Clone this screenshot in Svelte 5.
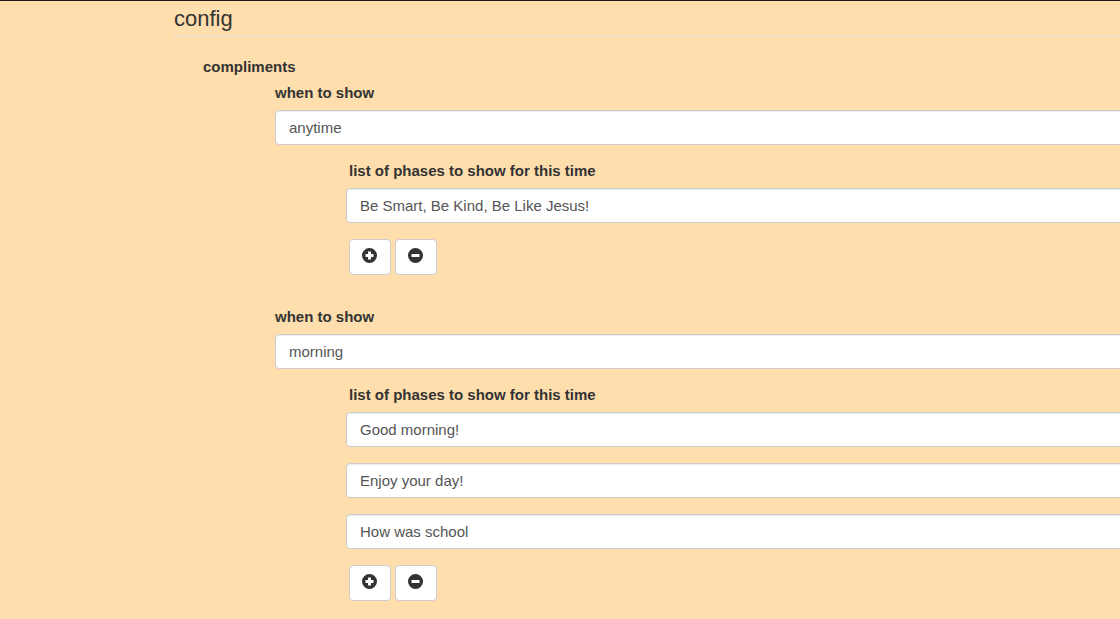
<script>
  let groups = $state([
    { time: 'anytime', phrases: ['Be Smart, Be Kind, Be Like Jesus!'] },
    { time: 'morning', phrases: ['Good morning!', 'Enjoy your day!', 'How was school'] }
  ]);

  function add(group) {
    group.phrases.push('');
  }

  function remove(group) {
    if (group.phrases.length > 1) group.phrases.pop();
  }
</script>

<form class="page">
  <fieldset class="config">
    <legend>config</legend>
    <div class="section">
      <h2>compliments</h2>
      <div class="groups">
        {#each groups as group, g}
          <section>
            <label for="time-{g}">when to show</label>
            <input id="time-{g}" type="text" bind:value={group.time} />
            <div class="phrases">
              <label class="indent" for="phrase-{g}-0">list of phases to show for this time</label>
              <div class="list">
                {#each group.phrases as _, p}
                  <input id="phrase-{g}-{p}" type="text" aria-label="phrase {p + 1}" bind:value={group.phrases[p]} />
                {/each}
                <div class="actions indent">
                  <button type="button" aria-label="Add" onclick={() => add(group)}>
                    <svg viewBox="0 0 15 15" aria-hidden="true">
                      <path fill-rule="evenodd" d="M7.5 0a7.5 7.5 0 1 0 0 15a7.5 7.5 0 0 0 0-15zM6 3.5h3V6h2.5v3H9v2.5H6V9H3.5V6H6z" />
                    </svg>
                  </button>
                  <button type="button" aria-label="Remove" onclick={() => remove(group)}>
                    <svg viewBox="0 0 15 15" aria-hidden="true">
                      <path fill-rule="evenodd" d="M7.5 0a7.5 7.5 0 1 0 0 15a7.5 7.5 0 0 0 0-15zM3.5 6h8v3h-8z" />
                    </svg>
                  </button>
                </div>
              </div>
            </div>
          </section>
        {/each}
      </div>
    </div>
  </fieldset>
</form>

<style>
  :global(body) {
    background: #ffdead;
    overflow: hidden;
  }

  .page {
    border-top: 1px solid #1a1a1a;
    padding-left: 174px;
    color: #333;
    font: 15px/21px "Liberation Sans", Arial, sans-serif;
  }

  .config {
    min-width: 0;
    margin: 0;
    padding: 0;
    border: 0;
  }

  legend {
    box-sizing: border-box;
    width: 100%;
    margin-bottom: 20px;
    padding: 2px 0 0;
    border-bottom: 1px solid #e5e5e5;
    font-size: 22px;
    line-height: 32px;
  }

  .section {
    padding-left: 29px;
  }

  h2 {
    margin: 0 0 5px;
    font-size: 15px;
    line-height: 21px;
  }

  .groups {
    display: grid;
    gap: 31px;
    padding-left: 72px;
    margin-right: -16px;
  }

  label {
    display: block;
    margin-bottom: 7px;
    font-weight: bold;
  }

  input {
    display: block;
    box-sizing: border-box;
    width: 100%;
    height: 35px;
    padding: 6px 13px;
    border: 1px solid #ccc;
    border-radius: 4px;
    background: #fff;
    box-shadow: inset 0 1px 1px rgba(0, 0, 0, 0.075);
    color: #555;
    font: inherit;
  }

  .phrases {
    margin-top: 15px;
    padding-left: 71px;
  }

  .list {
    display: grid;
    gap: 16px;
  }

  .indent {
    padding-left: 3px;
  }

  .actions {
    display: flex;
    gap: 4px;
  }

  button {
    display: flex;
    box-sizing: border-box;
    width: 42px;
    height: 36px;
    padding: 8px 12px;
    border: 1px solid #ccc;
    border-radius: 4px;
    background: #fff;
    color: #333;
    cursor: pointer;
  }

  button:hover {
    background: #e6e6e6;
  }

  svg {
    flex: none;
    width: 15px;
    height: 15px;
    fill: currentColor;
  }
</style>
